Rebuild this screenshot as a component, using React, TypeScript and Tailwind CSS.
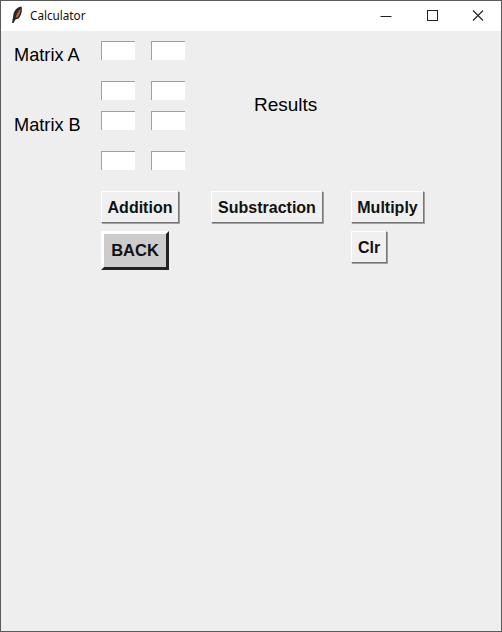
const Field = () => (
  <input
    type="text"
    className="w-[34px] h-[19px] bg-white border-t border-l border-t-[#a0a0a0] border-l-[#a0a0a0] outline-none"
  />
);

const FieldRow = () => (
  <div className="flex gap-[16px]">
    <Field />
    <Field />
  </div>
);

const Btn = ({ label, className = "" }: { label: string; className?: string }) => (
  <button
    className={
      "h-[32px] bg-[#f0f0f0] border border-t-white border-l-white border-r-[#777777] border-b-[#777777] shadow-[1px_1px_0_#a0a0a0] text-[16px] font-bold text-[#111111] text-center leading-none pt-[2px] " +
      className
    }
  >
    {label}
  </button>
);

export default function App() {
  return (
    <div
      className="w-[502px] h-[632px] flex flex-col bg-[#eeeeee] border border-[#5a5a5a] overflow-hidden text-black"
      style={{ fontFamily: '"Liberation Sans", Arial, sans-serif' }}
    >
      {/* title bar */}
      <div className="h-[30px] shrink-0 bg-white flex items-center">
        <svg width="12" height="18" viewBox="0 0 12 18" className="ml-[10px] mt-[-2px]">
          <path d="M1 17 L2.5 8 C3.5 4 6.5 1 10.5 0.5 C11.5 4 10.5 9.5 7.5 12.5 L4.5 13.5 L2.5 17 Z" fill="#2e2320" />
          <path d="M4.5 11.5 C5.5 8 7 5 9.5 2.5 C9.8 5.5 8.8 9 6.5 11.5 Z" fill="#b0604a" />
        </svg>
        <span className="ml-[7px] text-[11.7px] text-[#111111]" style={{ fontFamily: '"Noto Sans", sans-serif' }}>
          Calculator
        </span>
        <div className="ml-auto flex items-center text-[#222222]">
          <svg width="46" height="30" viewBox="0 0 46 30">
            <path d="M17.5 15.5 H28.5" stroke="currentColor" strokeWidth="1" />
          </svg>
          <svg width="46" height="30" viewBox="0 0 46 30">
            <rect x="18.5" y="9.5" width="10" height="10" fill="none" stroke="currentColor" strokeWidth="1" />
          </svg>
          <svg width="46" height="30" viewBox="0 0 46 30">
            <path d="M18 9.5 L28 19.5 M28 9.5 L18 19.5" stroke="currentColor" strokeWidth="1.1" />
          </svg>
        </div>
      </div>

      {/* matrices */}
      <div className="flex pl-[13px] pt-[10px]">
        <div className="w-[87px] flex flex-col text-[18.2px] leading-[21px]">
          <span className="mt-[4px]">Matrix A</span>
          <span className="mt-[49px]">Matrix B</span>
        </div>
        <div className="flex flex-col">
          <FieldRow />
          <div className="mt-[21px]">
            <FieldRow />
          </div>
          <div className="mt-[11px]">
            <FieldRow />
          </div>
          <div className="mt-[21px]">
            <FieldRow />
          </div>
        </div>
        <span className="ml-[69px] mt-[53px] text-[19px] leading-[21px]">Results</span>
      </div>

      {/* actions */}
      <div className="flex pl-[100px] pt-[21px]">
        <div className="w-[110px] flex flex-col items-start gap-[8px]">
          <Btn label="Addition" className="w-[78px]" />
          <button className="w-[68px] h-[39px] bg-[#cccccc] border-[3px] border-t-white border-l-white border-r-[#222222] border-b-[#222222] text-[16.5px] font-bold text-[#111111] leading-none">
            BACK
          </button>
        </div>
        <Btn label="Substraction" className="w-[112px]" />
        <div className="ml-[28px] flex flex-col items-start gap-[8px]">
          <Btn label="Multiply" className="w-[73px]" />
          <Btn label="Clr" className="w-[36px]" />
        </div>
      </div>
    </div>
  );
}
